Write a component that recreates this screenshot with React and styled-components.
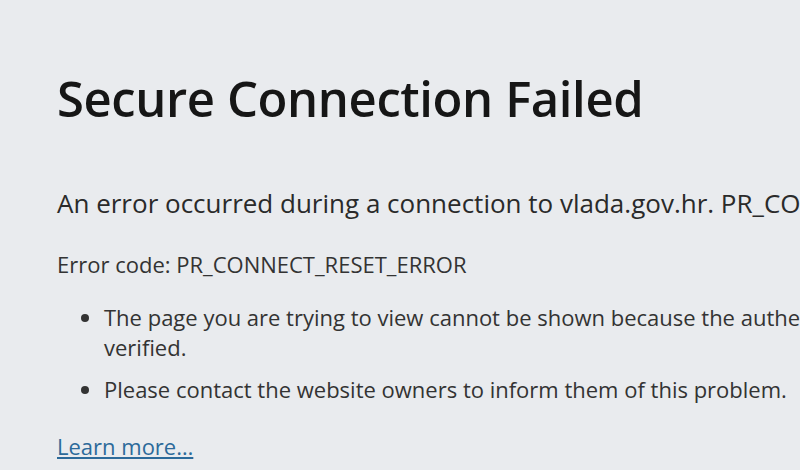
import React from 'react';
import styled, { createGlobalStyle } from 'styled-components';

const GlobalStyle = createGlobalStyle`
    html, body {
        margin: 0;
        padding: 0;
        background: #e9ebee;
        overflow: hidden;
    }
    body {
        font-family: "Open Sans", "Noto Sans", sans-serif;
        color: #2b2a33;
    }
`;

const Page = styled.div`
    width: 800px;
    height: 470px;
    overflow: hidden;
    padding: 68px 0 0 57px;
    box-sizing: border-box;
`;

const Content = styled.div`
    width: 1300px;
`;

const Title = styled.h1`
    margin: 0 0 59px;
    font-size: 49px;
    line-height: 60px;
    font-weight: 600;
    color: #161616;
    letter-spacing: -0.4px;
`;

const Lead = styled.p`
    margin: 0 0 31px;
    font-size: 26px;
    line-height: 32px;
    color: #2a2a2a;
    white-space: nowrap;
`;

const Small = styled.p`
    margin: 0 0 24px;
    font-size: 22px;
    line-height: 28px;
    color: #333;
    white-space: nowrap;
`;

const List = styled.ul`
    margin: 0 0 27px;
    padding: 0 0 0 47px;
    font-size: 22px;
    line-height: 30px;
    color: #333;
`;

const Item = styled.li`
    margin-bottom: 12px;
    white-space: nowrap;
`;

const LearnMore = styled.a`
    font-size: 22px;
    color: #2c6a9a;
    text-decoration: underline;
`;

export default function App() {
    return (
        <>
            <GlobalStyle />
            <Page>
                <Content>
                    <Title>Secure Connection Failed</Title>
                    <Lead>An error occurred during a connection to vlada.gov.hr. PR_CONNECT_RESET_ERROR</Lead>
                    <Small>Error code: PR_CONNECT_RESET_ERROR</Small>
                    <List>
                        <Item>
                            The page you are trying to view cannot be shown because the authenticity of the received data could not be
                            <br />
                            verified.
                        </Item>
                        <Item>Please contact the website owners to inform them of this problem.</Item>
                    </List>
                    <LearnMore href="#">Learn more…</LearnMore>
                </Content>
            </Page>
        </>
    );
}
